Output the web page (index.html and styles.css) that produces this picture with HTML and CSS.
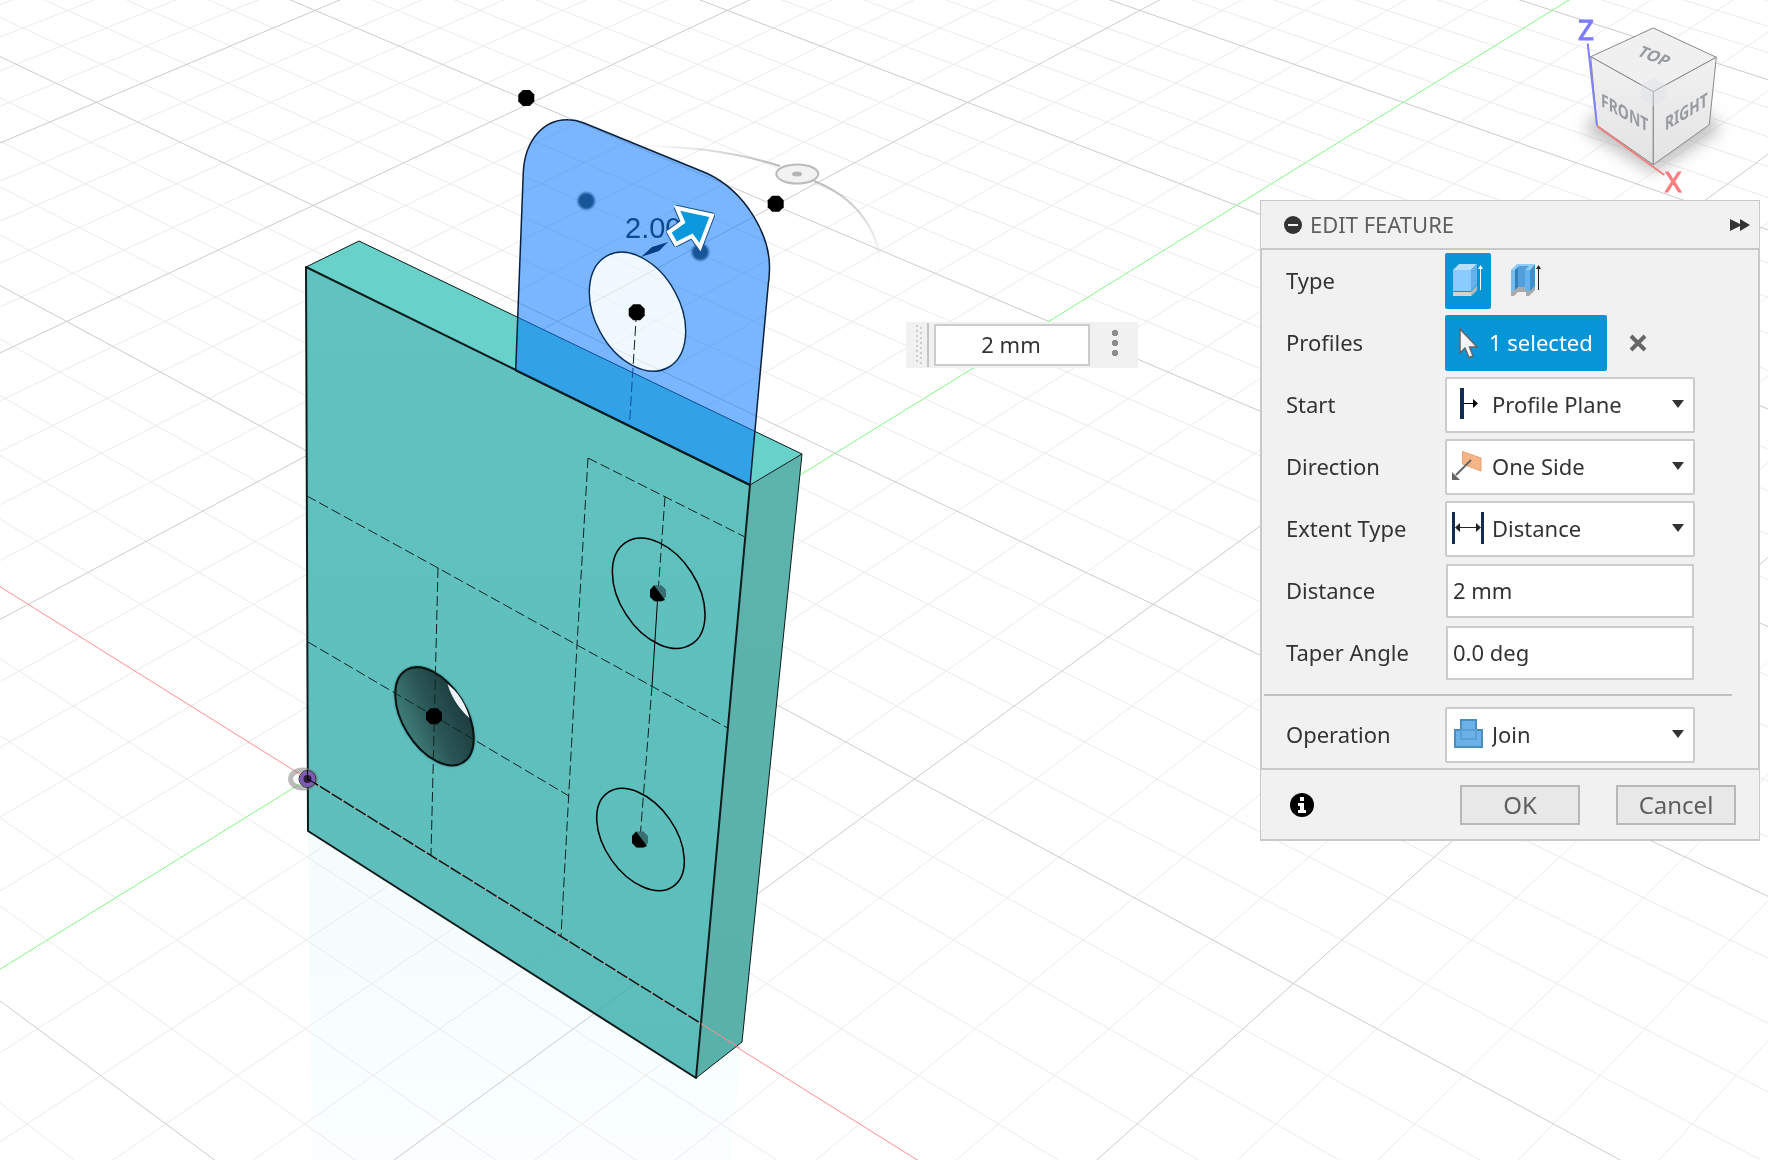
FILE: index.html
```
<!DOCTYPE html>
<html lang="en">
<head>
  <meta charset="UTF-8"/>
  <meta name="viewport" content="width=device-width, initial-scale=1.0"/>
  <title>Edit Feature</title>
  <link rel="stylesheet" href="styles.css">
</head>
<body>
  <main class="workspace">
    <!-- Model view -->
    <svg class="scene" viewBox="0 0 1768 1160" preserveAspectRatio="xMinYMin slice" role="img" aria-label="Model view">
      <defs>
        <linearGradient id="front" x1="0" y1="0" x2="0" y2="1">
          <stop offset="0" stop-color="#61c2c0"/><stop offset="1" stop-color="#5cbdbb"/>
        </linearGradient>
        <linearGradient id="side" x1="0" y1="0" x2="0" y2="1">
          <stop offset="0" stop-color="#5cb4ad"/><stop offset="1" stop-color="#59b1aa"/>
        </linearGradient>
        <linearGradient id="bore" x1="0.3" y1="1" x2="0.5" y2="0">
          <stop offset="0" stop-color="#40807b"/><stop offset="0.5" stop-color="#2a5554"/><stop offset="1" stop-color="#1d3c3f"/>
        </linearGradient>
        <linearGradient id="mirror" x1="0" y1="0" x2="0" y2="1">
          <stop offset="0" stop-color="#f5fcfc"/><stop offset="1" stop-color="#fafefe"/>
        </linearGradient>
        <linearGradient id="orbit" gradientUnits="userSpaceOnUse" x1="640" y1="0" x2="780" y2="0">
          <stop offset="0" stop-color="#bbb" stop-opacity="0"/><stop offset="1" stop-color="#bbb"/>
        </linearGradient>
        <linearGradient id="orbitEnd" gradientUnits="userSpaceOnUse" x1="0" y1="180" x2="0" y2="262">
          <stop offset="0" stop-color="#bbb"/><stop offset="1" stop-color="#bbb" stop-opacity="0"/>
        </linearGradient>
        <filter id="soft" x="-50%" y="-50%" width="200%" height="200%"><feGaussianBlur stdDeviation="1"/></filter>
        <clipPath id="underground"><path d="M308 779 701 1024 742 1042 696 1078 308 831Z"/></clipPath>
        <path id="dot" d="M-3.5-8h7L8-3.5v7L3.5 8h-7L-8 3.5v-7Z"/>
      </defs>

      <rect width="1768" height="1160" fill="#fff"/>
      <path d="M308 831 696 1078 742 1042 731 1160H312Z" fill="url(#mirror)"/>
      <g id="grid">
        <path class="grid-minor" id="gridMinor"/>
        <path class="grid-major" id="gridMajor"/>
      </g>
      <path class="axis-y" id="axisY"/>
      <path class="axis-x" id="axisX"/>

      <!-- Plate -->
      <path d="M306 267 359 241 802 454 750 485Z" fill="#68d2ca"/>
      <path d="M750 485 802 454 742 1042 696 1078Z" fill="url(#side)"/>
      <path d="M306 267 750 485 696 1078 308 831Z" fill="url(#front)"/>
      <use href="#grid" clip-path="url(#underground)" class="grid-under"/>
      <path class="edge-thin" d="M306 267 359 241 802 454 750 485M802 454 742 1042 696 1078"/>
      <path class="edge" d="M306 267 308 831 696 1078 750 485Z"/>
      <path class="axis-x" d="M308 779 740 1048"/>

      <g transform="translate(434.5 716.3) rotate(58.3)">
        <ellipse rx="55" ry="32.5" class="bore-glow" filter="url(#soft)"/>
        <ellipse rx="54.2" ry="31.7" fill="url(#bore)" class="bore"/>
      </g>
      <path d="M447.5 684C452 699 461 711 469.5 718C465 703 458 692 447.5 684Z" fill="#eef2fb"/>

      <!-- Sketch lines -->
      <path class="dash" d="M307 496 438 568 577 645 727 727.6M308 642 434 716 569 796M438 568 431 855M588 458 577 645 561 936M588 458 744 536.5M665 497 658 593M652 686 640 839"/>
      <path class="base-line" d="M308 779 701 1023.5"/>
      <path class="sketch" d="M658 593 652 686"/>
      <ellipse class="sketch-circle" rx="60.6" ry="38.9" transform="translate(658.7 593.3) rotate(57.2)"/>
      <ellipse class="sketch-circle" rx="57.1" ry="35.5" transform="translate(640.5 839.5) rotate(55)"/>
      <use href="#dot" x="434" y="716.3"/>
      <use href="#dot" x="658" y="593.3" fill="#386f70"/>
      <path d="M654 585.300 665 600 661.500 601.300H654.500L650 597V590Z"/>
      <use href="#dot" x="640" y="839.5" fill="#386f70"/>
      <path d="M636 831.500 647 846 643.500 847.500H636.500L632 843V836Z"/>

      <!-- Origin -->
      <ellipse cx="303" cy="779" rx="12.5" ry="9" fill="none" stroke="#777" stroke-opacity=".5" stroke-width="5"/>
      <circle cx="307.5" cy="779" r="6" fill="#2a1a3c" stroke="#7e5cb5" stroke-width="4"/>
      <circle cx="307.5" cy="779" r="8.5" fill="none" stroke="#333" stroke-width="1"/>
      <path class="sketch" d="M307.5 770V779L318 785"/>

      <!-- Tab profile -->
      <ellipse rx="63.6" ry="42.5" transform="translate(637.5 311.7) rotate(61.3)" fill="#e6f5ff" fill-opacity=".6"/>
      <path class="dash" d="M636.5 312 629.5 424"/>
      <path class="profile" fill-rule="evenodd" d="M515.7 370.3 523.3 172C525 140 544 119 568 119.7 574 119.7 579 121 584 123L706.7 173.3C745 191 772 236 769.3 273 769.3 276 769 280 768.3 284L750 485ZM607 255.9A63.6 42.5 61.3 1 0 668 367.5 63.6 42.5 61.3 1 0 607 255.9Z"/>
      <path class="profile-edge" d="M515.7 370.3 523.3 172C525 140 544 119 568 119.7 574 119.7 579 121 584 123L706.7 173.3C745 191 772 236 769.3 273 769.3 276 769 280 768.3 284L750 485"/>
      <ellipse class="profile-hole" rx="63.6" ry="42.5" transform="translate(637.5 311.7) rotate(61.3)"/>
      <path class="edge" d="M515.7 370.3 750 485"/>
      <use href="#dot" x="526.3" y="98"/>
      <use href="#dot" x="775.7" y="203.7"/>
      <use href="#dot" x="636.7" y="312.3"/>
      <circle cx="586.3" cy="201" r="8.5" fill="#175598" filter="url(#soft)"/>
      <circle cx="700.3" cy="252" r="8.5" fill="#175598" filter="url(#soft)"/>

      <!-- Rotation handle -->
      <path d="M640 146C690 146 735 152 780 166" fill="none" stroke="url(#orbit)" stroke-width="2"/>
      <path d="M814 181C852 196 877 225 880 262" fill="none" stroke="url(#orbitEnd)" stroke-width="2"/>
      <ellipse cx="797.3" cy="174" rx="21" ry="9.5" fill="#f2f2f2" stroke="#bbb" stroke-width="2"/>
      <ellipse cx="797" cy="174" rx="5" ry="2.5" fill="#b5b5b5"/>

      <text class="dimension" x="625" y="238">2.00</text>
      <path d="M641 257 652 247 668 242 659 251Z" fill="#053f83"/>
      <path class="push-arrow-shadow" d="M677 208 712 215.5 700 247 692 236 676 244 669 232 683 222Z"/>
      <path class="push-arrow" d="M677 208 712 215.5 700 247 692 236 676 244 669 232 683 222Z"/>
    </svg>

    <!-- View cube -->
    <svg class="viewcube" viewBox="0 0 228 210" role="img" aria-label="View cube">
      <defs>
        <linearGradient id="cubeFace" x1="0" y1="0" x2="0" y2="1">
          <stop offset="0" stop-color="#f1f1f2"/><stop offset="1" stop-color="#e3e3e4"/>
        </linearGradient>
        <filter id="cubeShadow" x="-30%" y="-30%" width="160%" height="160%"><feGaussianBlur stdDeviation="8"/></filter>
      </defs>
      <path d="M54 116 113 86 174 118 180 131 113 173 44 131Z" fill="#999" fill-opacity=".6" filter="url(#cubeShadow)"/>
      <path class="cube-top" d="M113.3 28 176.3 57.3 113.3 91.7 50.7 56.7Z"/>
      <path class="cube-face" d="M50.7 56.7 113.3 91.7V164.7L57 125.3Z"/>
      <path class="cube-face" d="M176.3 57.3 113.3 91.7V164.7L169.3 124.7Z"/>
      <path d="M113.3 78 126 85V98L113.3 106 101 98V85Z" fill="#dfe2e8" fill-opacity=".5"/>
      <text class="cube-label" transform="translate(96 55) rotate(22) skewX(-16)">TOP</text>
      <text class="cube-label" transform="translate(61 106) rotate(29) skewX(29)">FRONT</text>
      <text class="cube-label" transform="translate(125 131) rotate(-31) skewX(-31)">RIGHT</text>
      <path d="M47.7 43.3 57 125.5" stroke="#8080ff" stroke-width="2"/>
      <path d="M57 126 124.3 175" stroke="#f08080" stroke-width="2"/>
      <text class="cube-axis" x="38" y="40" fill="#7d7dff" stroke="#7d7dff">Z</text>
      <text class="cube-axis" x="125" y="192" fill="#ff7d7d" stroke="#ff7d7d">X</text>
    </svg>

    <!-- On-canvas distance input -->
    <div class="float-input">
      <svg class="grip" width="6" height="40" viewBox="0 0 6 40" aria-hidden="true"><path d="M1 0V40M5 2V40" stroke="#ccc" stroke-width="2" stroke-dasharray="2 3"/></svg>
      <input type="text" class="float-field" value="2 mm" aria-label="Distance on canvas">
      <button type="button" class="more" aria-label="More options">
        <svg width="6" height="28" viewBox="0 0 6 28"><path d="M1 0H5V1H6V5H5V6H1V5H0V1H1ZM1 10H5V11H6V15H5V16H1V15H0V11H1ZM1 20H5V21H6V25H5V26H1V25H0V21H1Z"/></svg>
      </button>
    </div>

    <!-- Edit feature dialog -->
    <form class="panel">
      <header class="panel-header">
        <svg width="18" height="18" viewBox="0 0 18 18" aria-hidden="true"><circle cx="9" cy="9" r="9" fill="#333"/><path d="M4 9h10" stroke="#f1f1f1" stroke-width="2"/></svg>
        <h1 class="panel-title">EDIT FEATURE</h1>
        <button type="button" class="icon-btn expand" aria-label="Expand panel">
          <svg width="20" height="12" viewBox="0 0 20 12"><path d="M0 0 10 5V0L20 6 10 12V7L0 12Z" fill="#333"/></svg>
        </button>
      </header>

      <div class="panel-body">
        <div class="field" role="group" aria-labelledby="typeLabel">
          <span class="label" id="typeLabel">Type</span>
          <div class="type-list">
            <button type="button" class="type-btn active" aria-label="Extrude">
              <svg width="46" height="56" viewBox="0 0 46 56">
                <path d="M8 39H26L32 33V37L26 43H8Z" fill="#d3d3d3"/><path d="M26 39 32 33V37L26 43Z" fill="#b5b5b5"/>
                <path d="M8 17H26V38H8Z" fill="#8bcbff"/><path d="M8 17 14 11H32L26 17Z" fill="#b5deff"/><path d="M26 17 32 11V32L26 38Z" fill="#63b0ea"/>
                <path d="M35.5 37V14" stroke="#fff"/><path d="M33 16 35.5 12 38 16Z" fill="#fff"/>
              </svg>
            </button>
            <button type="button" class="type-btn" aria-label="Thin extrude">
              <svg width="46" height="56" viewBox="0 0 46 56">
                <path d="M8 39 13 34H27L32 33V37L26 43H23V39H15L11 43H8Z" fill="#aaa"/>
                <path d="M15 13H27L24 17V34H15Z" fill="#529fd9"/><path d="M12 16 15 13V34L12 37Z" fill="#347fb8"/>
                <path d="M8 17H12V37L8 39Z" fill="#72bbf1"/><path d="M22 17H27V38H22Z" fill="#65b3ed"/>
                <path d="M27 17 32 11V33L27 38Z" fill="#3e8fca"/><path d="M8 17 14 11H32L27 17H22L26 13H16L12 17Z" fill="#8fcbf7"/>
                <path d="M35.5 37V14" stroke="#222"/><path d="M33 16 35.5 12 38 16Z" fill="#222"/>
              </svg>
            </button>
          </div>
        </div>

        <div class="field" role="group" aria-labelledby="profilesLabel">
          <span class="label" id="profilesLabel">Profiles</span>
          <div class="profiles">
            <button type="button" class="select-btn">
              <svg width="20" height="32" viewBox="0 0 20 32" aria-hidden="true"><path d="M1 2V26L6 21 10 30.5 14 29 10.5 20H18Z" fill="#f5f5f5" stroke="#666" stroke-width="1.5"/></svg>
              <span class="select-text">1 selected</span>
            </button>
            <button type="button" class="icon-btn clear" aria-label="Clear selection">
              <svg width="18" height="18" viewBox="0 0 18 18"><path d="M2 2 16 16M16 2 2 16" stroke="#666" stroke-width="4"/></svg>
            </button>
          </div>
        </div>

        <div class="field">
          <label class="label" for="start">Start</label>
          <div class="dropdown">
            <svg class="option-icon" viewBox="0 0 32 32" aria-hidden="true"><path d="M10 0V31" stroke="#132c55" stroke-width="4"/><path d="M12 15.500h10" stroke="#000"/><path d="M21 11 26 15.500 21 20Z"/></svg>
            <select id="start"><option>Profile Plane</option></select>
            <svg class="caret" viewBox="0 0 12 8" aria-hidden="true"><path d="M0 0H12L6 8Z"/></svg>
          </div>
        </div>

        <div class="field">
          <label class="label" for="direction">Direction</label>
          <div class="dropdown">
            <svg class="option-icon" viewBox="0 0 32 32" aria-hidden="true"><path d="M10.500 1.500 29 8V21L10.500 14Z" fill="#f5b586" stroke="#e2a274"/><path d="M19 10 4 25" stroke="#666" stroke-width="2"/><path d="M0 22V30H8Z" fill="#666"/></svg>
            <select id="direction"><option>One Side</option></select>
            <svg class="caret" viewBox="0 0 12 8" aria-hidden="true"><path d="M0 0H12L6 8Z"/></svg>
          </div>
        </div>

        <div class="field">
          <label class="label" for="extent">Extent Type</label>
          <div class="dropdown">
            <svg class="option-icon" viewBox="0 0 32 32" aria-hidden="true"><path d="M1.5 0V32M30.5 0V32" stroke="#132c55" stroke-width="3"/><path d="M5 15.5h22" stroke="#222"/><path d="M3 15.5 8 11V20ZM29 15.5 24 11V20Z" fill="#222"/></svg>
            <select id="extent"><option>Distance</option></select>
            <svg class="caret" viewBox="0 0 12 8" aria-hidden="true"><path d="M0 0H12L6 8Z"/></svg>
          </div>
        </div>

        <div class="field">
          <label class="label" for="distance">Distance</label>
          <input type="text" class="text-field" id="distance" value="2 mm">
        </div>

        <div class="field">
          <label class="label" for="taper">Taper Angle</label>
          <input type="text" class="text-field" id="taper" value="0.0 deg">
        </div>

        <hr class="divider">

        <div class="field">
          <label class="label" for="operation">Operation</label>
          <div class="dropdown">
            <svg class="option-icon" viewBox="0 0 32 32" aria-hidden="true"><path d="M9 2H24V12H30V29H3V12H9Z" fill="#69b1e7" stroke="#4a8dbf" stroke-width="2"/><path d="M9 12H24V21H9Z" fill="none" stroke="#5aa0d2" stroke-width="2"/></svg>
            <select id="operation"><option>Join</option></select>
            <svg class="caret" viewBox="0 0 12 8" aria-hidden="true"><path d="M0 0H12L6 8Z"/></svg>
          </div>
        </div>
      </div>

      <footer class="panel-footer">
        <button type="button" class="icon-btn info" aria-label="Information">
          <svg width="24" height="24" viewBox="0 0 24 24"><circle cx="12" cy="12" r="12"/><path d="M10 4H14V8H10ZM8 10H14V17H16V20H8V17H10V13H8Z" fill="#fff"/></svg>
        </button>
        <button type="submit" class="btn">OK</button>
        <button type="button" class="btn">Cancel</button>
      </footer>
    </form>
  </main>
  <script src="script.js"></script>
</body>
</html>
```
FILE: styles.css
```
body { margin: 0; font-family: "Noto Sans", sans-serif; font-size: 22px; color: #333; background-color: #fff; }
* { box-sizing: border-box; }
button, input, select { font: inherit; color: inherit; }
button { padding: 0; cursor: pointer; }
svg { display: block; }

.workspace { position: relative; height: 100vh; overflow: hidden; }
.scene { width: 100%; height: 100%; }

/* scene */
.grid-minor, .grid-major, .axis-x, .axis-y { fill: none; stroke-width: 1; }
.grid-minor { stroke: #ebebeb; }
.grid-major { stroke: #cbcbcb; }
.grid-under { opacity: 0.3; mix-blend-mode: multiply; }
.axis-x { stroke: #ff8f8f; }
.axis-y { stroke: #84f884; }
.edge-thin { fill: none; stroke: #0c1c1c; stroke-width: 1; }
.edge { fill: none; stroke: #0c1c1c; stroke-width: 2; stroke-linejoin: round; }
.bore { stroke: #081414; stroke-width: 2; }
.bore-glow { fill: #2d6866; }
.dash { fill: none; stroke: #0c2424; stroke-width: 1; stroke-dasharray: 10 4; }
.base-line { fill: none; stroke: #0c1414; stroke-width: 1.5; stroke-dasharray: 12 2; }
.sketch { fill: none; stroke: #000; stroke-width: 1; }
.sketch-circle { fill: none; stroke: #000; stroke-width: 1.5; }
.profile { fill: rgba(5, 119, 255, 0.536); }
.profile-edge { fill: none; stroke: #0b2038; stroke-width: 1.5; }
.profile-hole { fill: none; stroke: #07305c; stroke-width: 1.5; }
.dimension { font-family: "Liberation Sans", Arial, sans-serif; font-size: 29px; fill: #0f488c; }
.push-arrow { fill: #0c98dc; stroke: #fff; stroke-width: 4; }
.push-arrow-shadow { fill: none; stroke: #15508c; stroke-width: 6; stroke-linejoin: round; }

/* view cube */
.viewcube { position: absolute; top: 0; right: 0; width: 228px; height: 210px; }
.cube-top, .cube-face { stroke: #888; stroke-width: 1; }
.cube-top { fill: #f0f0f0; }
.cube-face { fill: url(#cubeFace); }
.cube-label { font-size: 16px; font-weight: bold; fill: #979b9f; }
.cube-axis { font-size: 28px; }

/* canvas input */
.float-input {
  position: absolute;
  top: 322px;
  left: 906px;
  display: flex;
  align-items: center;
  width: 232px;
  height: 46px;
  padding-left: 10px;
  background-color: #f1f1f1;
}
.float-field {
  width: 156px;
  height: 42px;
  margin-left: 5px;
  padding: 0 2px 2px 0;
  border: 2px solid #ccc;
  text-align: center;
  background-color: #fff;
}
.grip { flex: none; width: 13px; height: 44px; padding: 2px 5px 2px 0; border-right: 2px solid #c4c4c4; }
.more { flex: 1; display: flex; justify-content: center; height: 30px; padding-left: 2px; border: none; background: none; fill: #8e8e8e; }

/* dialog */
.panel { position: absolute; top: 200px; right: 8px; width: 500px; background-color: #f1f1f1; }
.panel-header {
  display: flex;
  align-items: center;
  gap: 8px;
  height: 50px;
  padding: 0 9px 0 23px;
  border: 1px solid #c9c9c9;
  border-bottom-width: 2px;
}
.panel-title { margin: 0; padding-bottom: 2px; font-size: 22px; font-weight: normal; color: #5e5e5e; }
.icon-btn { display: flex; border: none; background: none; }
.expand { margin-left: auto; }
.panel-body {
  display: flex;
  flex-direction: column;
  gap: 6px;
  padding: 3px 0 5px;
  border: solid #c9c9c9;
  border-width: 0 2px 2px;
}
.field { display: flex; align-items: center; height: 56px; padding-left: 24px; }
.label { flex: 0 0 159px; padding-bottom: 2px; }
.type-list { display: flex; gap: 12px; }
.type-btn { width: 46px; height: 56px; border: none; border-radius: 2px; background: none; }
.type-btn.active { background-color: #0696d7; }
.profiles { display: flex; align-items: center; gap: 22px; }
.select-btn {
  display: flex;
  align-items: center;
  gap: 10px;
  width: 162px;
  height: 56px;
  padding-left: 14px;
  border: none;
  border-radius: 2px;
  color: #fff;
  background-color: #0696d7;
  white-space: nowrap;
}
.select-text { padding-bottom: 2px; }
.dropdown { position: relative; width: 250px; }
.dropdown select {
  appearance: none;
  display: block;
  width: 100%;
  height: 56px;
  padding: 0 30px 2px 45px;
  border: 2px solid #ccc;
  border-radius: 2px;
  background-color: #fff;
}
.option-icon { position: absolute; top: 11px; left: 7px; width: 32px; height: 32px; pointer-events: none; }
.caret { position: absolute; top: 23px; right: 11px; width: 12px; height: 8px; fill: #333; pointer-events: none; }
.text-field { width: 248px; height: 54px; margin: 0 1px; padding: 0 5px 2px; border: 2px solid #ccc; background-color: #fff; }
.divider { width: 468px; height: 2px; margin: 7px 2px 5px; border: none; background-color: #c0c0c0; }
.panel-footer {
  display: flex;
  align-items: center;
  gap: 36px;
  height: 71px;
  padding: 0 23px 0 29px;
  border: 1px solid #c9c9c9;
  border-top: none;
  border-bottom-width: 2px;
}
.info { margin-right: auto; }
.btn { width: 120px; height: 40px; border: 2px solid #b8b8b8; font-size: 24px; line-height: 36px; color: #5e5e5e; background-color: #e8e8e8; }
```
FILE: script.js
```
// Ground plane in perspective: u runs along the X axis, v along the Y axis
function project(u, v) {
  const scale = 1 / (0.0016485 - 0.0001294 * (u - v));
  const x = 330.4 + scale * ((u + v) / 2 - 0.0372);
  const y = scale / 0.25267 - 1621.7;
  return x.toFixed(1) + ' ' + y.toFixed(1);
}

function segment(u1, v1, u2, v2) {
  return 'M' + project(u1, v1) + 'L' + project(u2, v2);
}

let minor = '';
let major = '';
for (let i = -30; i <= 50; i++) {
  if (i === 0) continue; // the axes have their own colour
  const c = i / 5;
  const lines = segment(c, c - 4, c, c + 8) + segment(c - 8, c, c + 4, c);
  if (i % 5 === 0) {
    major += lines;
  } else {
    minor += lines;
  }
}

document.getElementById('gridMinor').setAttribute('d', minor);
document.getElementById('gridMajor').setAttribute('d', major);
document.getElementById('axisX').setAttribute('d', segment(-6, 0, 4, 0));
document.getElementById('axisY').setAttribute('d', segment(0, -4, 0, 8));
```
